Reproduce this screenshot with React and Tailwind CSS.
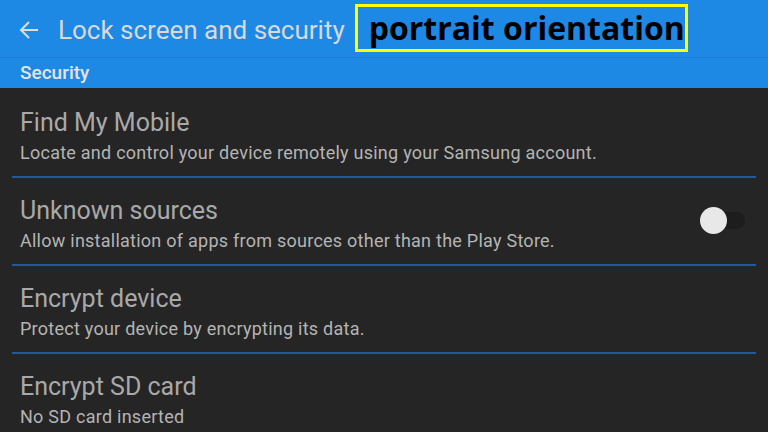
import React, { useState } from "react";

const rows = [
  {
    title: "Find My Mobile",
    desc: "Locate and control your device remotely using your Samsung account.",
  },
  {
    title: "Unknown sources",
    desc: "Allow installation of apps from sources other than the Play Store.",
    toggle: true,
  },
  {
    title: "Encrypt device",
    desc: "Protect your device by encrypting its data.",
  },
  {
    title: "Encrypt SD card",
    desc: "No SD card inserted",
  },
];

const App = () => {
  const [unknown, setUnknown] = useState(false);

  return (
    <div
      className="w-[768px] h-[432px] overflow-hidden bg-[#252525] flex flex-col"
      style={{ fontFamily: "Roboto, 'Noto Sans', sans-serif" }}
    >
      {/* app bar */}
      <div className="h-[58px] shrink-0 bg-[#1e88e5] border-b border-[#1a7bd0] flex items-center">
        <svg
          width={20}
          height={20}
          viewBox="0 0 20 20"
          fill="none"
          className="ml-[19px] mt-[2px] text-[#dcdcdc] shrink-0"
        >
          <path
            d="M19 10H2M10 2L2 10L10 18"
            stroke="currentColor"
            strokeWidth="2"
          />
        </svg>
        <h1 className="ml-[19px] mt-[2px] text-[26px] leading-none text-[#d9d9d9] whitespace-nowrap">
          Lock screen and security
        </h1>
        <div className="ml-[10px] -mt-[2px] h-[48px] w-[333px] shrink-0 border-[3px] border-[#ffff00] flex items-center pl-[11px]">
          <span
            className="text-[32px] leading-none font-bold text-black whitespace-nowrap"
            style={{ fontFamily: "'Open Sans', sans-serif" }}
          >
            portrait orientation
          </span>
        </div>
      </div>

      {/* section header */}
      <div className="h-[30px] shrink-0 bg-[#1e88e5] flex items-center px-[20px]">
        <span className="text-[19px] font-medium text-[#e4e4e4]">Security</span>
      </div>

      {/* rows */}
      <div className="mt-[2px] flex flex-col">
        {rows.map((row) => (
          <div key={row.title} className="h-[88px] shrink-0 flex flex-col">
            <div className="flex-1 flex items-start pl-[20px] pr-[23px] pt-[19px]">
              <div className="flex-1 flex flex-col">
                <span className="text-[25px] leading-[28px] text-[#a9a9a9]">
                  {row.title}
                </span>
                <span className="mt-[6px] text-[18px] leading-[20px] tracking-[0.25px] text-[#b4b4b4]">
                  {row.desc}
                </span>
              </div>
              {row.toggle && (
                <button
                  onClick={() => setUnknown(!unknown)}
                  className="relative mt-[9px] w-[45px] h-[28px] flex items-center"
                >
                  <span className="absolute right-0 w-[32px] h-[17px] rounded-full bg-[#1d1d1d]" />
                  <span
                    className={
                      unknown
                        ? "absolute right-0 w-[27px] h-[27px] rounded-full bg-[#e8e8e8]"
                        : "absolute left-0 w-[27px] h-[27px] rounded-full bg-[#e8e8e8]"
                    }
                  />
                </button>
              )}
            </div>
            <div className="mx-[12px] h-[2px] bg-[#1f5b97]" />
          </div>
        ))}
      </div>
    </div>
  );
};

export default App;
